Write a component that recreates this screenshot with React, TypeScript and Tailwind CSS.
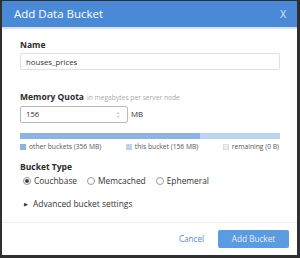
import React, { useState } from "react";

const font = { fontFamily: '"Open Sans", "Noto Sans", sans-serif' };

function Radio({ checked, label }: { checked: boolean; label: string }) {
  return (
    <label className="flex items-center gap-[3px] text-[8.4px] text-[#333] leading-[12px]">
      <span className="w-[8px] h-[8px] rounded-full border border-[#999] flex items-center justify-center bg-white">
        {checked && <span className="w-[4px] h-[4px] rounded-full bg-[#444]" />}
      </span>
      <span>{label}</span>
    </label>
  );
}

export default function App() {
  const [name, setName] = useState("houses_prices");
  const [quota, setQuota] = useState("156");

  return (
    <div className="w-[300px] h-[258px] bg-[#2f2f2f] pt-[1px] pl-[2px]" style={font}>
      <div className="w-[295px] h-[254px] bg-white flex flex-col">
        {/* Header */}
        <div className="h-[28px] bg-[#4a89d6] flex items-center justify-between pl-[12px] pr-[11px] border-b-2 border-[#d7e4f4]">
          <span className="text-white text-[11.5px] leading-none">Add Data Bucket</span>
          <span className="text-[#dfe9f7] text-[10px] leading-none">X</span>
        </div>

        <div className="px-[18px] flex flex-col">
          {/* Name */}
          <div className="mt-[9px] text-[8.5px] font-bold text-[#2b2b2b] leading-[14px]">Name</div>
          <input
            value={name}
            onChange={(e) => setName(e.target.value)}
            className="mt-[1px] w-[260px] h-[17px] border border-[#e0e0e0] rounded-[2px] px-[5px] text-[7.8px] text-[#333] outline-none"
          />

          {/* Memory Quota */}
          <div className="mt-[20px] flex items-baseline gap-[3px] leading-[14px]">
            <span className="text-[8.5px] font-bold text-[#2b2b2b]">Memory Quota</span>
            <span className="text-[6.7px] text-[#aaa]">in megabytes per server node</span>
          </div>
          <div className="mt-[1px] flex items-center gap-[3px]">
            <div className="w-[108px] h-[17px] border border-[#bbb] rounded-[2px] flex items-center justify-between pl-[5px] pr-[7px]">
              <input
                value={quota}
                onChange={(e) => setQuota(e.target.value)}
                className="w-[80px] text-[7.7px] text-[#333] outline-none bg-transparent"
              />
              <span className="flex flex-col items-center leading-[4px] text-[#c4c4c4]">
                <span className="text-[4px]">▲</span>
                <span className="text-[4px]">▼</span>
              </span>
            </div>
            <span className="text-[7.9px] text-[#333]">MB</span>
          </div>

          {/* Usage bar */}
          <div className="mt-[10px] w-[260px] h-[6px] flex bg-[#eeeeea]">
            <div className="w-[180px] bg-[#8cb5e4]" />
            <div className="w-[80px] bg-[#bad3f1]" />
          </div>
          <div className="mt-[3px] flex items-center text-[6.7px] text-[#555] leading-[10px] whitespace-nowrap">
            <span className="w-[107px] flex items-center gap-[3px]">
              <span className="w-[6px] h-[6px] bg-[#8cb5e4]" />
              other buckets (356 MB)
            </span>
            <span className="w-[98px] flex items-center gap-[3px]">
              <span className="w-[6px] h-[6px] bg-[#bad3f1]" />
              this bucket (156 MB)
            </span>
            <span className="flex items-center gap-[3px]">
              <span className="w-[6px] h-[6px] bg-[#eeeeea] border border-[#ddd]" />
              remaining (0 B)
            </span>
          </div>

          {/* Bucket type */}
          <div className="mt-[8px] text-[8.5px] font-bold text-[#2b2b2b] leading-[14px]">Bucket Type</div>
          <div className="mt-[1px] flex items-center gap-[10px] pl-[3px]">
            <Radio checked label="Couchbase" />
            <Radio checked={false} label="Memcached" />
            <Radio checked={false} label="Ephemeral" />
          </div>

          <div className="mt-[11px] flex items-center gap-[5px] pl-[4px] text-[8.4px] text-[#333] leading-[12px]">
            <span className="text-[5px] leading-none">▶</span>
            <span>Advanced bucket settings</span>
          </div>
        </div>

        {/* Footer */}
        <div className="mt-auto border-t border-[#eeeeee] h-[33px] flex items-center justify-end gap-[14px] pr-[8px]">
          <span className="text-[8.1px] text-[#4a89d6]">Cancel</span>
          <button className="w-[71px] h-[18px] bg-[#5b9be0] text-[#e3eefb] text-[8.2px] rounded-[2px]">
            Add Bucket
          </button>
        </div>
      </div>
    </div>
  );
}
